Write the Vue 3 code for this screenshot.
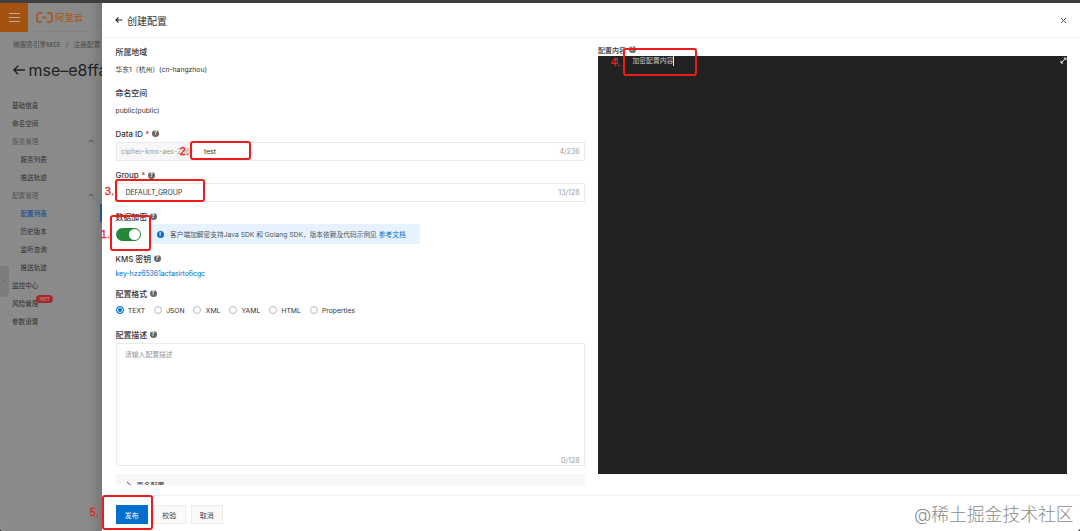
<script setup>
import { ref } from "vue";

const menu = [
  { text: "基础信息" },
  { text: "命名空间" },
  { text: "服务管理", group: true },
  { text: "服务列表", sub: true },
  { text: "推送轨迹", sub: true },
  { text: "配置管理", group: true },
  { text: "配置列表", sub: true, active: true },
  { text: "历史版本", sub: true },
  { text: "监听查询", sub: true },
  { text: "推送轨迹", sub: true },
  { text: "监控中心" },
  { text: "风险管理", badge: "HOT" },
  { text: "参数设置" },
];
const formats = ["TEXT", "JSON", "XML", "YAML", "HTML", "Properties"];
const format = ref("TEXT");
const dataId = ref("test");
const group = ref("DEFAULT_GROUP");
const desc = ref("");
const encrypted = ref(true);
const marks = [1, 2, 3, 4, 5];
</script>

<template>
  <div class="page">
    <div class="topbar"></div>
    <div class="body">
      <aside class="side">
        <div class="brand">
          <div class="burger"><i></i><i></i><i></i></div>
          <svg class="logo" width="17" height="11" viewBox="0 0 17 11">
            <path
              d="M6 1H3.5Q1 1 1 3.5V7.5Q1 10 3.5 10H6M11 1H13.5Q16 1 16 3.5V7.5Q16 10 13.5 10H11M6.5 5.5H10.5"
              fill="none"
              stroke="#a65a24"
              stroke-width="1.9"
            />
          </svg>
          <span>阿里云</span>
        </div>
        <div class="crumb">微服务引擎MSE<em>/</em>注册配置</div>
        <div class="title">
          <svg width="12" height="10" viewBox="0 0 12 10">
            <path d="M12 5H1.2M5.2 .8L1 5L5.2 9.2" fill="none" stroke="#222" stroke-width="1.4" />
          </svg>
          <span>mse–e8ffa</span>
        </div>
        <ul class="menu">
          <li
            v-for="(item, i) in menu"
            :key="i"
            :class="{ sub: item.sub, group: item.group, active: item.active }"
          >
            <span>{{ item.text }}</span>
            <b v-if="item.badge">{{ item.badge }}</b>
            <svg v-if="item.group" width="6" height="4" viewBox="0 0 6 4">
              <path d="M.7 3L3 1L5.3 3" fill="none" stroke="#444" stroke-width=".9" />
            </svg>
          </li>
        </ul>
        <div class="handle">‹</div>
      </aside>

      <main class="drawer">
        <header>
          <svg width="8" height="8" viewBox="0 0 8 8">
            <path d="M7.5 4H1M3.5 1.3L.9 4L3.5 6.7" fill="none" stroke="#222" stroke-width="1.1" />
          </svg>
          <h1>创建配置</h1>
          <svg class="close" width="7" height="7" viewBox="0 0 7 7">
            <path d="M1 1L6 6M6 1L1 6" stroke="#444" stroke-width=".9" />
          </svg>
        </header>

        <div class="content">
          <div class="form">
            <section class="f41">
              <label>所属地域</label>
              <p>华东1（杭州）(cn-hangzhou)</p>
            </section>
            <section class="f41">
              <label>命名空间</label>
              <p>public(public)</p>
            </section>
            <section class="f41">
              <label>Data ID <s>*</s> <i class="help">?</i></label>
              <div class="input">
                <span class="prefix">cipher-kms-aes-256-</span>
                <input v-model="dataId" />
                <span class="count">4/236</span>
              </div>
            </section>
            <section class="f41">
              <label>Group <s>*</s> <i class="help">?</i></label>
              <div class="input">
                <input v-model="group" />
                <span class="count">13/128</span>
              </div>
            </section>
            <section class="f43">
              <label>数据加密 <i class="help">?</i></label>
              <div class="encrypt">
                <div class="switch" :class="{ on: encrypted }" @click="encrypted = !encrypted"></div>
                <div class="notice">
                  <i class="info">i</i>
                  <span>客户端加解密支持Java SDK 和 Golang SDK，版本依赖及代码示例见 <a>参考文档</a></span>
                </div>
              </div>
            </section>
            <section class="f35">
              <label>KMS 密钥 <i class="help">?</i></label>
              <a class="key">key-hzz65361acfasirto6cgc</a>
            </section>
            <section class="f41">
              <label>配置格式 <i class="help">?</i></label>
              <div class="radios">
                <div
                  v-for="f in formats"
                  :key="f"
                  class="radio"
                  :class="{ checked: f === format }"
                  @click="format = f"
                >
                  <i></i><span>{{ f }}</span>
                </div>
              </div>
            </section>
            <section class="last">
              <label>配置描述 <i class="help">?</i></label>
              <div class="area">
                <textarea v-model="desc" placeholder="请输入配置描述"></textarea>
                <span class="count">0/128</span>
              </div>
            </section>
            <div class="more">
              <svg width="6" height="8" viewBox="0 0 6 8">
                <path d="M1 1L4.5 4L1 7" fill="none" stroke="#444" stroke-width=".9" />
              </svg>
              <span>更多配置</span>
            </div>
          </div>

          <div class="editor-col">
            <label>配置内容 <i class="help">?</i></label>
            <div class="editor">
              <span class="line-no">1</span>
              <span class="code">加密配置内容</span>
              <svg width="7" height="7" viewBox="0 0 7 7">
                <path d="M1.2 5.8L5.8 1.2M3.8 1H6V3.2M1 3.8V6H3.2" fill="none" stroke="#eee" />
              </svg>
            </div>
          </div>
        </div>

        <footer>
          <button class="primary">发布</button>
          <button>校验</button>
          <button>取消</button>
        </footer>
      </main>
    </div>

    <div v-for="n in marks" :key="n" class="mark" :class="'mark' + n">
      <span>{{ n }}.</span>
    </div>
    <div class="watermark">@稀土掘金技术社区</div>
  </div>
</template>

<style>
body {
  background: #333;
  overflow: hidden;
}
</style>

<style scoped>
* {
  box-sizing: border-box;
}
.page {
  position: relative;
  width: 1080px;
  height: 531px;
  overflow: hidden;
  background: #fff;
  border-radius: 0 0 4px 4px;
  font-family: Inter, "Noto Sans CJK SC", sans-serif;
  font-size: 7px;
  color: #333;
}
.topbar {
  height: 3px;
  background: #3e3e3e;
}
.body {
  display: flex;
  height: 528px;
}
i,
em {
  font-style: normal;
}
svg {
  flex-shrink: 0;
}

/* dimmed page behind the drawer */
.side {
  position: relative;
  width: 102px;
  overflow: hidden;
  white-space: nowrap;
  background: linear-gradient(90deg, #8b8b8b 0, #898989 88%, #777 100%);
  color: #303030;
}
.brand {
  display: flex;
  align-items: center;
  height: 29px;
  border-bottom: 1px solid #828282;
  color: #a65a24;
  font-size: 9.4px;
  font-weight: 500;
}
.burger {
  display: flex;
  flex-direction: column;
  justify-content: center;
  align-items: center;
  gap: 3px;
  width: 28px;
  height: 29px;
  background: #a3520f;
}
.burger i {
  width: 11px;
  height: 1px;
  background: #bdaa9c;
}
.logo {
  margin: 0 2px 0 8px;
}
.crumb {
  height: 26px;
  padding-left: 13px;
  line-height: 26px;
  font-size: 6.7px;
  color: #484848;
}
.crumb em {
  margin: 0 5.2px;
}
.title {
  display: flex;
  align-items: center;
  gap: 4px;
  height: 24px;
  padding-left: 12.5px;
  font-size: 16px;
  color: #222;
}
.menu {
  margin: 14px 0 0;
  padding: 0;
  list-style: none;
}
.menu li {
  display: flex;
  align-items: center;
  height: 18px;
  padding-left: 12px;
  font-size: 6.6px;
}
.menu .sub {
  padding-left: 20.5px;
}
.menu .group {
  color: #555;
}
.menu .group svg {
  margin-left: 50px;
}
.menu .active {
  color: #15508a;
  font-weight: 500;
  border-right: 2px solid #27577f;
}
.menu b {
  height: 8px;
  margin: -9px 0 0 -2px;
  padding: 0 3px;
  border-radius: 4px;
  background: #a32a2e;
  color: #c99;
  font-size: 5px;
  font-weight: 400;
  line-height: 8px;
}
.handle {
  position: absolute;
  left: 0;
  top: 263px;
  width: 9px;
  height: 31px;
  border-radius: 0 4px 4px 0;
  background: #7d7d7d;
  color: #555;
  line-height: 30px;
  text-align: center;
}

.drawer {
  display: flex;
  flex-direction: column;
  width: 978px;
  background: #fff;
}
header {
  display: flex;
  flex-shrink: 0;
  align-items: center;
  gap: 4px;
  height: 35px;
  padding: 0 13px;
  border-bottom: 1px solid #f2f2f2;
}
h1 {
  margin: 0;
  font-size: 10px;
  font-weight: 400;
}
.close {
  margin-left: auto;
}
.content {
  display: flex;
  flex-shrink: 0;
  gap: 13px;
  height: 456.5px;
  padding: 5.5px 13px 0 13.5px;
}
.form {
  width: 469.5px;
}
.f41 {
  height: 41.2px;
}
.f43 {
  height: 42.7px;
}
.f35 {
  height: 34.5px;
}
.last {
  height: 147.5px;
}
label {
  display: flex;
  align-items: center;
  gap: 2.5px;
  height: 16px;
  font-size: 7.9px;
  font-weight: 500;
  white-space: nowrap;
}
label s {
  color: #d93026;
  text-decoration: none;
}
.help,
.info {
  width: 7px;
  height: 7px;
  border-radius: 50%;
  background: #666;
  color: #fff;
  font-size: 5.5px;
  font-weight: 700;
  line-height: 7px;
  text-align: center;
}
p {
  margin: 3px 0 0;
  line-height: 14px;
  font-size: 6.8px;
}
a {
  color: #0070cc;
}
.input {
  display: flex;
  align-items: center;
  height: 19px;
  border: 1px solid #ebebeb;
}
.prefix {
  width: 77px;
  height: 17px;
  padding-left: 4.5px;
  background: #f7f7f7;
  color: #999;
  line-height: 17px;
  white-space: nowrap;
  letter-spacing: 0.05px;
}
input {
  flex: 1;
  min-width: 0;
  padding: 0 0 0 9px;
  border: 0;
  outline: 0;
  background: none;
  color: #333;
  font: inherit;
  font-size: 6.9px;
}
.prefix + input {
  padding-left: 10.5px;
}
.count {
  padding-right: 4.5px;
  color: #999;
}
.encrypt {
  display: flex;
  align-items: center;
  gap: 9.5px;
  height: 20px;
}
.switch {
  display: flex;
  align-items: center;
  width: 25.5px;
  height: 13px;
  padding: 0 1px;
  border-radius: 7px;
  background: #ccc;
}
.switch.on {
  justify-content: flex-end;
  background: #23883c;
}
.switch::after {
  content: "";
  width: 11px;
  height: 11px;
  border-radius: 50%;
  background: #fff;
}
.notice {
  display: flex;
  align-items: center;
  gap: 6.5px;
  width: 269.5px;
  height: 20px;
  padding-left: 6px;
  background: #e6f2fd;
  color: #555;
  font-size: 6.73px;
  white-space: nowrap;
}
.info {
  background: #0070cc;
}
.key {
  display: block;
  line-height: 14px;
  letter-spacing: -0.1px;
}
.radios {
  display: flex;
  gap: 8.8px;
  height: 18px;
  align-items: center;
}
.radio {
  display: flex;
  align-items: center;
  gap: 4.3px;
  font-size: 6.8px;
}
.radio i {
  width: 8px;
  height: 8px;
  border: 1px solid #bbb;
  border-radius: 50%;
}
.radio.checked i {
  border-color: #0070cc;
  background: #0070cc;
  box-shadow: inset 0 0 0 1px #fff;
}
.area {
  display: flex;
  flex-direction: column;
  height: 123px;
  border: 1px solid #ebebeb;
}
textarea {
  flex: 1;
  padding: 5px 8.5px;
  border: 0;
  outline: 0;
  resize: none;
  font: inherit;
  font-size: 6.8px;
}
textarea::placeholder {
  color: #999;
}
.area .count {
  height: 10px;
  line-height: 11px;
  text-align: right;
}
.more {
  display: flex;
  align-items: flex-start;
  gap: 5px;
  height: 11px;
  padding: 7px 0 0 10px;
  overflow: hidden;
  background: #f7f7f7;
  line-height: 10px;
}
.editor-col {
  width: 469px;
}
.editor-col label {
  height: 12.5px;
  font-size: 7px;
}
.editor {
  display: flex;
  align-items: flex-start;
  height: 418px;
  background: #222;
  color: #c8c8c8;
  line-height: 11px;
}
.line-no {
  width: 20px;
  color: #777;
  text-align: right;
}
.code {
  margin-left: 14.5px;
  border-right: 1px solid #eee;
  font-size: 6.8px;
  line-height: 10px;
}
.editor svg {
  margin: 1px 0 0 auto;
}
footer {
  display: flex;
  align-items: flex-start;
  gap: 5px;
  flex: 1;
  padding: 9.5px 13.5px 0;
  border-top: 1px solid #f0f0f0;
}
button {
  width: 32.5px;
  height: 19px;
  padding: 0;
  border: 1px solid #ebebeb;
  background: #fafafa;
  color: #444;
  font: inherit;
}
button.primary {
  border-color: #0070cc;
  background: #0070cc;
  color: #fff;
}

/* numbered callouts over the form */
.mark {
  position: absolute;
  border: 2px solid #ec1c1c;
  border-radius: 3px;
  color: #ec1c1c;
  font-family: "Liberation Sans", sans-serif;
  font-size: 11px;
  -webkit-text-stroke: 0.3px #ec1c1c;
}
.mark span {
  position: absolute;
  right: 100%;
  top: 50%;
  margin-right: 3px;
  line-height: 12px;
  transform: translateY(-50%);
}
.mark1 {
  left: 110px;
  top: 215px;
  width: 41px;
  height: 36px;
}
.mark2 {
  left: 190px;
  top: 141px;
  width: 61px;
  height: 19px;
}
.mark3 {
  left: 115px;
  top: 179px;
  width: 90px;
  height: 23px;
}
.mark4 {
  left: 623px;
  top: 48px;
  width: 74px;
  height: 28px;
}
.mark5 {
  left: 102px;
  top: 495px;
  width: 51px;
  height: 35px;
}
.mark1 span {
  margin: 1px 2px 0 0;
}
.mark4 span {
  margin-right: 5px;
}
.mark5 span {
  margin: -1px 5px 0 0;
}
.watermark {
  position: absolute;
  left: 914px;
  top: 502px;
  color: #8c8c8c;
  font-size: 17.8px;
  font-weight: 300;
  line-height: 26px;
  white-space: nowrap;
}
</style>
